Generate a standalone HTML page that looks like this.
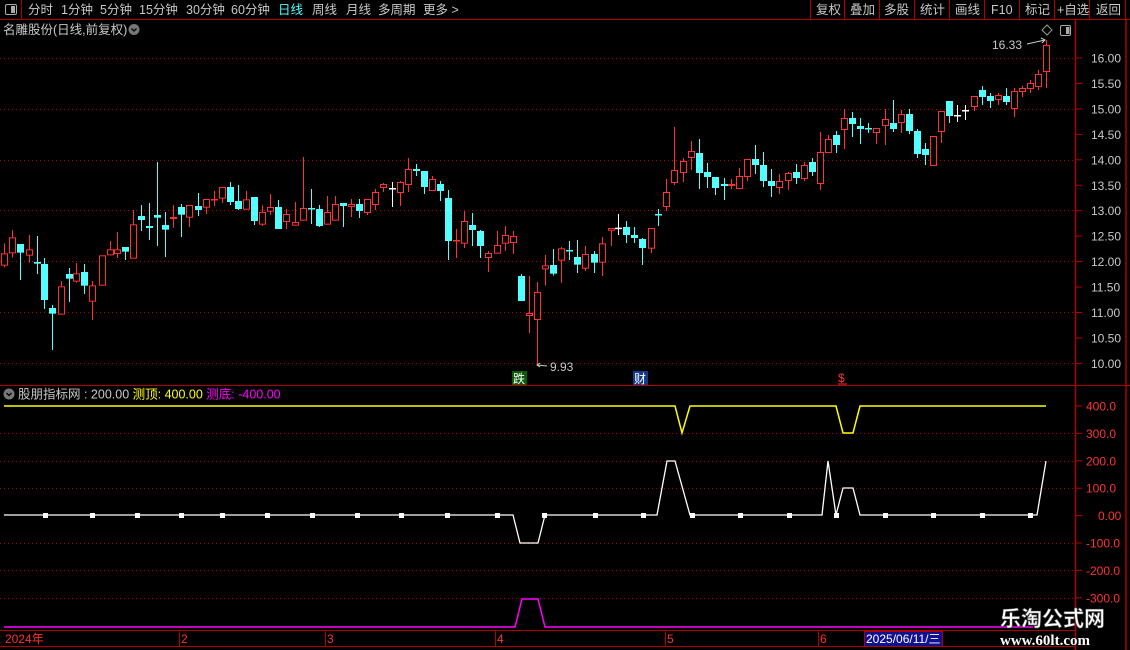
<!DOCTYPE html>
<html><head><meta charset="utf-8"><style>
body{margin:0;background:#000;width:1130px;height:650px;overflow:hidden;font-family:"Liberation Sans","Noto Sans CJK SC",sans-serif;}
svg{display:block}
</style></head><body>
<svg id="s" width="1130" height="650" xmlns="http://www.w3.org/2000/svg" font-family="Liberation Sans, Noto Sans CJK SC, sans-serif" font-size="12">
<rect width="1130" height="650" fill="#000"/>
<!-- top bar -->
<line x1="0" y1="19.5" x2="1130" y2="19.5" stroke="#b00000"/>
<line x1="21.5" y1="0" x2="21.5" y2="19" stroke="#b00000"/>
<rect x="5.5" y="4.5" width="11" height="10" rx="1.5" fill="none" stroke="#aaa"/><rect x="11" y="6" width="4" height="7" fill="#aaa"/>
<g fill="#c8c8c8" font-size="12.5">
<text x="28" y="14">分时</text><text x="61" y="14">1分钟</text><text x="100" y="14">5分钟</text><text x="139" y="14">15分钟</text><text x="186" y="14">30分钟</text><text x="231" y="14">60分钟</text>
<text x="278" y="14" fill="#54ffff">日线</text><text x="312" y="14">周线</text><text x="346" y="14">月线</text><text x="378" y="14">多周期</text><text x="423" y="14">更多 &gt;</text>
<text x="816" y="14">复权</text><text x="850" y="14">叠加</text><text x="884" y="14">多股</text><text x="920" y="14">统计</text><text x="955" y="14">画线</text><text x="991" y="14">F10</text><text x="1025" y="14">标记</text><text x="1057" y="14">+自选</text><text x="1096" y="14">返回</text>
</g>
<g stroke="#b00000"><line x1="810.5" y1="0" x2="810.5" y2="19"/><line x1="844.5" y1="0" x2="844.5" y2="19"/><line x1="879.5" y1="0" x2="879.5" y2="19"/><line x1="914.5" y1="0" x2="914.5" y2="19"/><line x1="949.5" y1="0" x2="949.5" y2="19"/><line x1="984.5" y1="0" x2="984.5" y2="19"/><line x1="1019.5" y1="0" x2="1019.5" y2="19"/><line x1="1054.5" y1="0" x2="1054.5" y2="19"/><line x1="1089.5" y1="0" x2="1089.5" y2="19"/><line x1="1125.5" y1="0" x2="1125.5" y2="19"/></g>
<text x="3" y="34" fill="#c8c8c8" font-size="12.5">名雕股份(日线,前复权)</text>
<circle cx="134" cy="29.5" r="5.5" fill="#777"/><path d="M131.5 28.5 L134 31 L136.5 28.5" stroke="#000" fill="none" stroke-width="1.3"/>
<path d="M1047 25 L1052 30 L1047 35 L1042 30 Z" fill="none" stroke="#999"/>
<rect x="1060.5" y="25.5" width="10" height="10" rx="1.5" fill="none" stroke="#aaa"/><rect x="1066" y="27" width="3.5" height="7" fill="#aaa"/>
<!-- axis frame -->
<line x1="1075.5" y1="20" x2="1075.5" y2="650" stroke="#b00000" stroke-width="1.5"/>
<line x1="1126" y1="20" x2="1126" y2="650" stroke="#b00000" stroke-width="1.5"/>
<line x1="0" y1="385.5" x2="1130" y2="385.5" stroke="#b00000"/>
<g id="grid" stroke="#b00000" stroke-dasharray="1 3"></g>
<g id="ax" fill="#c8c8c8" font-size="12"></g>
<g id="cd"></g>
<!-- annotations -->
<path d="M537 365 L547 366" stroke="#ccc"/><path d="M540 363 L537 365 L540 367" stroke="#ccc" fill="none"/>
<text x="550" y="371" fill="#c8c8c8">9.93</text>
<text x="992" y="49" fill="#c8c8c8">16.33</text>
<path d="M1027 44 L1045 40" stroke="#ccc"/><path d="M1041 38 L1045 40 L1042 43" stroke="#ccc" fill="none"/>
<rect x="512" y="371" width="15" height="14" fill="#0a5a0a"/><text x="513" y="383" fill="#fff" font-size="12">跌</text>
<rect x="633" y="371" width="15" height="14" fill="#123a8a"/><text x="634" y="383" fill="#fff" font-size="12">财</text>
<text x="838" y="382" fill="#ff3232" font-size="12">$</text><line x1="838" y1="384" x2="847" y2="384" stroke="#ff3232"/>
<!-- indicator -->
<circle cx="9" cy="394" r="5.5" fill="#777"/><path d="M6.5 393 L9 395.5 L11.5 393" stroke="#000" fill="none" stroke-width="1.3"/>
<text x="18" y="398.5" fill="#c8c8c8" font-size="12.5">股朋指标网 : 200.00 <tspan fill="#ffff00">测顶: 400.00</tspan> <tspan fill="#ff00ff">测底: -400.00</tspan></text>
<polyline points="4,406 675,406 682,433 690,406 836,406 843,433 853,433 860,406 1046,406" fill="none" stroke="#ffff00" stroke-width="1.5"/>
<polyline points="4,515 513,515 520,543 538,543 545,515 657,515 667,461 675,461 690,515 822,515 828,461 836,515 843,488 853,488 860,515 1037,515 1046,461" fill="none" stroke="#fff" stroke-width="1.3"/>
<g id="sq" fill="#fff"></g>
<polyline points="4,627 515,627 522,599 538,599 545,627 1033,627" fill="none" stroke="#ff00ff" stroke-width="1.5"/>
<!-- time axis -->
<line x1="0" y1="630.5" x2="1075" y2="630.5" stroke="#b00000"/>
<line x1="0" y1="646.5" x2="1075" y2="646.5" stroke="#b00000"/>
<g fill="#ff3232" font-size="12"><text x="5" y="643">2024年</text><text x="181" y="643">2</text><text x="327" y="643">3</text><text x="497" y="643">4</text><text x="667" y="643">5</text><text x="820" y="643">6</text></g>
<g stroke="#b00000"><line x1="179.5" y1="631" x2="179.5" y2="646"/><line x1="325.5" y1="631" x2="325.5" y2="646"/><line x1="495.5" y1="631" x2="495.5" y2="646"/><line x1="665.5" y1="631" x2="665.5" y2="646"/><line x1="818.5" y1="631" x2="818.5" y2="646"/></g>
<rect x="864.5" y="631.5" width="78" height="15" fill="#101090" stroke="#b00000"/>
<text x="866" y="643" fill="#fff" font-size="12">2025/06/11/三</text>
<text x="1000" y="626" fill="#fff" font-size="21" font-weight="bold" font-family="Noto Sans CJK SC, sans-serif" stroke="#555" stroke-width="0.6">乐淘公式网</text>
<text x="1000" y="645" fill="#fff" font-size="15" font-weight="bold" font-family="Liberation Serif, serif">www.60lt.com</text>
</svg>
<script>
var ns="http://www.w3.org/2000/svg";
function el(p,t,a){var e=document.createElementNS(ns,t);for(var k in a)e.setAttribute(k,a[k]);p.appendChild(e);return e;}
var g=document.getElementById('grid'),ax=document.getElementById('ax');
[58,109,160,210,261,312,363].forEach(function(y){el(g,'line',{x1:0,y1:y+.5,x2:1075,y2:y+.5});});
[433,461,488,543,570,598].forEach(function(y){el(g,'line',{x1:0,y1:y+.5,x2:1075,y2:y+.5});});
var pl=['16.00','15.50','15.00','14.50','14.00','13.50','13.00','12.50','12.00','11.50','11.00','10.50','10.00'];
pl.forEach(function(t,i){var y=58+i*25.45;el(ax,'line',{x1:1076,y1:y,x2:1082,y2:y,stroke:'#b00000'});var e=el(ax,'text',{x:1091,y:y+4.5});e.textContent=t;});
var il=['400.0','300.0','200.0','100.0','0.00','-100.0','-200.0','-300.0'];
il.forEach(function(t,i){var y=406+i*27.4;el(ax,'line',{x1:1076,y1:y,x2:1082,y2:y,stroke:'#b00000'});var e=el(ax,'text',{x:t.length==4?1098:1086,y:y+4.5,fill:'#ff3232'});e.textContent=t;});
var A=[[13,280,310,347,352,'r'],[36,240,262,310,323,'r'],[59,282,282,308,390,'c'],[83,255,298,317,338,'r'],[106,258,336,341,372,'c'],[129,324,342,450,477,'c'],[152,465,474,491,600,'c'],[176,393,409,494,494,'r'],[199,354,372,386,456,'c'],[222,339,370,395,398,'r'],[245,342,366,407,432,'c'],[268,393,406,455,510,'r'],[295,316,316,407,407,'r'],[318,273,298,316,316,'r'],[341,246,298,312,324,'r'],[364,291,291,305,330,'c'],[387,180,223,326,326,'r'],[410,165,198,210,243,'c'],[434,159,228,234,270,'c'],[457,36,195,203,288,'c'],[480,186,225,239,321,'c'],[503,165,201,207,233,'r'],[527,162,171,194,261,'c'],[550,165,165,203,231,'r'],[576,129,168,180,198,'c'],[599,147,147,173,192,'r'],[622,123,147,150,168,'r'],[646,111,111,146,159,'r'],[669,96,111,156,165,'c'],[692,105,153,177,180,'c'],[715,123,148,179,179,'r'],[738,141,141,213,225,'c'],[762,165,186,224,228,'r'],[785,132,171,185,195,'r'],[808,150,171,237,237,'c'],[831,177,192,216,237,'r'],[857,156,216,227,227,'r'],[880,21,174,212,212,'r'],[904,117,174,177,222,'c'],[927,165,177,228,231,'c'],[950,138,186,224,224,'r'],[973,138,162,212,212,'r'],[997,159,159,168,231,'c'],[1020,147,162,171,201,'r'],[1043,147,162,183,204,'c'],[1066,147,147,189,195,'r'],[1090,117,126,165,180,'r'],[1113,99,102,114,126,'r'],[1138,96,114,117,171,'w'],[1162,93,96,129,168,'r'],[1185,24,57,105,126,'r'],[1208,42,57,63,78,'c'],[1232,63,63,111,132,'c'],[1255,78,87,123,123,'r'],[1278,93,102,123,153,'c'],[1301,120,144,273,330,'c'],[1325,237,270,273,324,'r'],[1348,183,213,281,294,'r'],[1371,189,225,240,288,'c'],[1394,240,243,288,324,'c'],[1418,303,309,324,366,'r'],[1444,243,285,311,311,'r'],[1467,228,255,281,303,'r'],[1490,243,258,279,312,'r'],[1514,372,378,453,453,'c']];
var B=[[73,495,526,538,587,'r'],[97,477,525,551,557,'c'],[120,471,475,512,579,'r'],[143,453,480,483,510,'c'],[166,450,501,524,549,'c'],[189,468,492,536,543,'r'],[216,483,492,518,549,'c'],[239,441,460,518,558,'r'],[263,414,414,422,468,'r'],[285,372,413,415,435,'w'],[309,393,411,435,459,'c'],[332,411,435,444,459,'c'],[355,444,447,474,525,'c'],[379,414,414,476,489,'r'],[402,357,372,375,408,'c'],[425,267,306,351,363,'r'],[448,111,240,279,285,'r'],[472,204,213,249,276,'r'],[498,153,183,204,240,'r'],[521,147,189,249,297,'c'],[544,219,246,261,294,'c'],[567,261,261,294,315,'c'],[591,264,282,288,330,'c'],[614,267,282,288,297,'r'],[637,234,258,297,297,'r'],[660,207,207,261,273,'r'],[683,165,207,225,252,'c'],[707,186,225,273,291,'c'],[730,237,273,288,321,'c'],[753,252,273,294,312,'r'],[779,246,249,273,300,'r'],[802,222,246,264,282,'c'],[825,216,225,267,273,'r'],[848,204,216,246,258,'c'],[872,126,186,282,300,'r'],[895,135,147,189,189,'r'],[918,123,135,165,189,'c'],[942,57,84,120,177,'r'],[965,66,84,102,141,'c'],[988,84,108,117,162,'c'],[1011,99,114,117,129,'c'],[1034,114,114,129,162,'r'],[1061,57,87,108,165,'r'],[1084,30,99,117,126,'c'],[1107,60,72,99,129,'r'],[1130,57,72,123,132,'c'],[1153,117,123,192,204,'c'],[1177,159,177,195,225,'c'],[1200,138,138,228,228,'r'],[1223,63,63,126,159,'r'],[1247,33,33,78,99,'c'],[1270,45,75,78,96,'w'],[1293,45,60,63,90,'w'],[1317,18,18,51,63,'r']];
var C=[];
A.forEach(function(a){C.push([a[0]/2.904,150+a[1]/3,150+a[2]/3,150+a[3]/3,150+a[4]/3,a[5]]);});
C.push([529,276,313,316,333,'r']);C.push([537,282,292,320,365,'r']);
B.forEach(function(a){C.push([520+a[0]/2.904,90+a[1]/3,90+a[2]/3,90+a[3]/3,90+a[4]/3,a[5]]);});
C.push([982,86,90,97,105,'c']);C.push([990,93,96,101,108,'c']);C.push([998,93,95,100,105,'r']);C.push([1006,88,96,102,105,'c']);C.push([1014,88,91,109,117,'r']);C.push([1022,86,88,92,97,'r']);C.push([1030,80,83,89,93,'r']);C.push([1038,70,74,87,90,'r']);C.push([1046,40,45,72,88,'r']);
var cd=document.getElementById('cd');
C.forEach(function(c){var x=Math.round(c[0]),col=c[5]=='r'?'#ff3232':(c[5]=='c'?'#54ffff':'#ffffff');
el(cd,'line',{x1:x+.5,y1:c[1],x2:x+.5,y2:c[4],stroke:col});
var h=c[3]-c[2];
if(h<1.5){el(cd,'rect',{x:x-3,y:c[2],width:7,height:1.5,fill:col});}
else if(c[5]=='r'){el(cd,'rect',{x:x-2.5,y:c[2]+.5,width:6,height:h-1,fill:'#000',stroke:col});}
else {el(cd,'rect',{x:x-3,y:c[2],width:7,height:h,fill:col});}
});
var sq=document.getElementById('sq');
[45,92,137,181,222,267,312,357,401,447,497,544,595,643,692,740,789,836,885,933,982,1030].forEach(function(x){el(sq,'rect',{x:x-2,y:513,width:5,height:5});});
</script>
</body></html>
